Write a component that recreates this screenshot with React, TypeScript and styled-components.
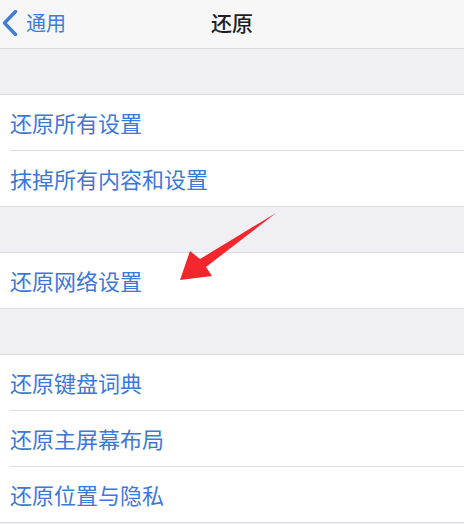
import React from "react";
import styled, { createGlobalStyle } from "styled-components";

const GlobalStyle = createGlobalStyle`
  html, body {
    margin: 0;
    padding: 0;
    background: #efeff4;
    font-family: "Noto Sans CJK SC", "Noto Sans", sans-serif;
  }
`;

const groups = [
  ["还原所有设置", "抹掉所有内容和设置"],
  ["还原网络设置"],
  ["还原键盘词典", "还原主屏幕布局", "还原位置与隐私"],
];

const App = () => {
  return (
    <Screen>
      <GlobalStyle />
      <NavBar>
        <BackButton>
          <svg width="16" height="26" viewBox="0 0 16 26">
            <path
              d="M13.5 1.5 L2.5 13 L13.5 24.5"
              fill="none"
              stroke="#3f7ddb"
              strokeWidth="3.4"
              strokeLinecap="round"
              strokeLinejoin="round"
            />
          </svg>
          <BackLabel>通用</BackLabel>
        </BackButton>
        <Title>还原</Title>
      </NavBar>
      {groups.map((items, i) => (
        <React.Fragment key={i}>
          <Spacer />
          <Group>
            {items.map((label) => (
              <Row key={label}>
                <RowLabel>{label}</RowLabel>
              </Row>
            ))}
          </Group>
        </React.Fragment>
      ))}
      <Pointer width="464" height="524" viewBox="0 0 464 524">
        <polygon
          points="180,280 190,251 200,259 276,213 206,267 212,276"
          fill="#f2262b"
        />
      </Pointer>
    </Screen>
  );
};

const Screen = styled.div`
  position: relative;
  width: 464px;
  height: 524px;
  overflow: hidden;
  background: #efeff4;
`;

const NavBar = styled.div`
  position: relative;
  height: 48px;
  background: #f7f7f8;
  border-bottom: 1px solid #d9d9dd;
  display: flex;
  align-items: center;
  justify-content: center;
`;

const BackButton = styled.div`
  position: absolute;
  left: 2px;
  top: 0;
  height: 46px;
  display: flex;
  align-items: center;
  gap: 8px;
`;

const BackLabel = styled.span`
  font-size: 20px;
  color: #3f7ddb;
  line-height: 1;
`;

const Title = styled.span`
  font-size: 21px;
  font-weight: 500;
  color: #1f1f1f;
  line-height: 1;
  margin-top: -4px;
`;

const Spacer = styled.div`
  height: 45px;
  border-bottom: 1px solid #dcdce0;
`;

const Group = styled.div`
  background: #fff;
  border-bottom: 1px solid #dcdce0;
`;

const Row = styled.div`
  height: 55px;
  margin-left: 10px;
  display: flex;
  align-items: center;
  & + & {
    border-top: 1px solid #dcdce0;
  }
`;

const RowLabel = styled.span`
  font-size: 22px;
  color: #3c78d8;
  line-height: 1;
  margin-top: -2px;
`;

const Pointer = styled.svg`
  position: absolute;
  left: 0;
  top: 0;
  pointer-events: none;
`;

export default App;
